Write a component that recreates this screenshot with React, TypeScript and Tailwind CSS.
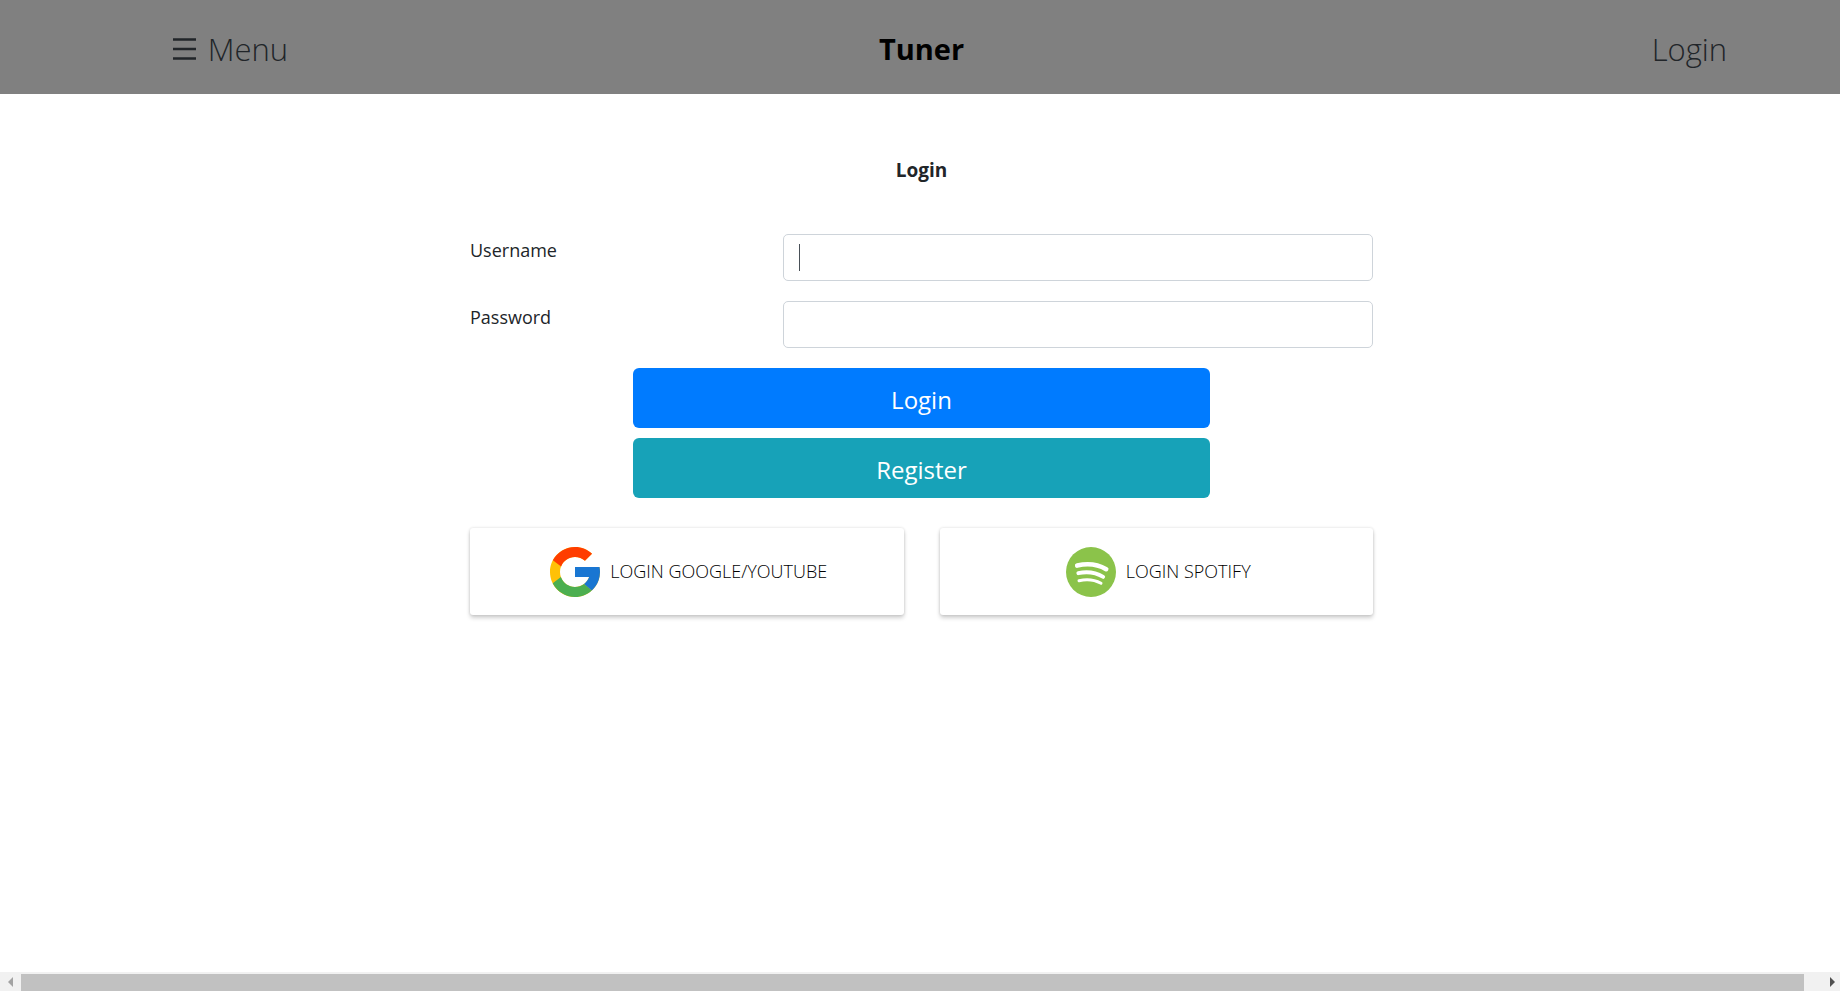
import React from "react";

function GoogleLogo() {
  return (
    <svg className="size-[50px] shrink-0" viewBox="4 4 40 40" aria-hidden="true">
      <path fill="#FFC107" d="M43.611 20.083H42V20H24v8h11.303c-1.649 4.657-6.08 8-11.303 8-6.627 0-12-5.373-12-12s5.373-12 12-12c3.059 0 5.842 1.154 7.961 3.039l5.657-5.657C34.046 6.053 29.268 4 24 4 12.955 4 4 12.955 4 24s8.955 20 20 20 20-8.955 20-20c0-1.341-.138-2.65-.389-3.917z" />
      <path fill="#FF3D00" d="M6.306 14.691l6.571 4.819C14.655 15.108 18.961 12 24 12c3.059 0 5.842 1.154 7.961 3.039l5.657-5.657C34.046 6.053 29.268 4 24 4 16.318 4 9.656 8.337 6.306 14.691z" />
      <path fill="#4CAF50" d="M24 44c5.166 0 9.86-1.977 13.409-5.192l-6.19-5.238C29.211 35.091 26.715 36 24 36c-5.202 0-9.619-3.317-11.283-7.946l-6.522 5.025C9.505 39.556 16.227 44 24 44z" />
      <path fill="#1976D2" d="M43.611 20.083H42V20H24v8h11.303c-.792 2.237-2.231 4.166-4.087 5.571l6.193 5.238C36.971 39.205 44 34 44 24c0-1.341-.138-2.65-.389-3.917z" />
    </svg>
  );
}

function SpotifyLogo() {
  return (
    <svg className="size-[50px] shrink-0" viewBox="0 0 50 50" aria-hidden="true">
      <circle cx="25" cy="25" r="25" fill="#8BC34A" />
      <g fill="none" stroke="#fff" strokeLinecap="round">
        <path strokeWidth="4.6" d="M11.2 18.6C21 16.3 32 17.5 40.2 22.2" />
        <path strokeWidth="3.8" d="M12.3 26.2C21 24.300 30 25.600 37.200 29.900" />
        <path strokeWidth="3" d="M13 33.700C20.500 32 28.500 32.700 35 36.300" />
      </g>
    </svg>
  );
}

function Field({ id, label, type, caret }: { id: string; label: string; type: string; caret?: boolean }) {
  return (
    <div className="grid grid-cols-3 gap-9">
      <label htmlFor={id} className="text-[18px] leading-8">{label}</label>
      <div className="relative col-span-2">
        <input
          id={id}
          type={type}
          className="block h-[47px] w-full rounded-[5px] border border-[#ced4da] bg-white px-[15px] text-[18px] text-[#495057] outline-none focus:border-[#80bdff]"
        />
        {caret && <span className="absolute left-4 top-[10px] h-[27px] w-px bg-[#495057]" />}
      </div>
    </div>
  );
}

const card =
  "flex h-[87px] items-center justify-center gap-[10px] rounded-[3px] bg-white pl-1 text-[18px] font-light text-black shadow-[0_3px_4px_rgba(0,0,0,0.18),0_0_3px_rgba(0,0,0,0.14)]";

export default function App() {
  return (
    <div className="flex min-h-screen flex-col overflow-x-hidden bg-white font-['Open_Sans','Noto_Sans',sans-serif] text-[#212529]">
      <div className="-mr-[3px] flex-1">
        <header className="grid h-[94px] grid-cols-12 items-center bg-[#808080] pt-1 text-center text-[31px]">
          <button type="button" className="col-span-3 flex items-center justify-center gap-3 font-light">
            <svg className="h-[22px] w-[23px]" viewBox="0 0 23 22" aria-hidden="true">
              <path d="M0 1.500h23M0 11h23M0 20.500h23" stroke="#212529" strokeWidth="2.400" />
            </svg>
            Menu
          </button>
          <h1 className="col-span-6 text-[29px] font-bold text-black">Tuner</h1>
          <a href="#login" className="col-span-2 col-start-11 font-light">Login</a>
        </header>

        <main id="login" className="mx-auto w-full max-w-[903px] pt-[60px]">
          <h2 className="text-center text-[19px] leading-8 font-bold">Login</h2>
          <form className="mt-12 flex flex-col gap-5" onSubmit={(e) => e.preventDefault()}>
            <Field id="username" label="Username" type="text" caret />
            <Field id="password" label="Password" type="password" />
            <div className="mx-auto flex w-full max-w-[577px] flex-col gap-[10px] text-2xl text-white">
              <button type="submit" className="h-[60px] rounded-md bg-[#007bff] pt-[3px]">Login</button>
              <button type="button" className="h-[60px] rounded-md bg-[#17a2b8] pt-[3px]">Register</button>
            </div>
          </form>
          <div className="mt-[30px] grid grid-cols-2 gap-9">
            <button type="button" className={card}>
              <GoogleLogo />
              LOGIN GOOGLE/YOUTUBE
            </button>
            <button type="button" className={card}>
              <SpotifyLogo />
              LOGIN SPOTIFY
            </button>
          </div>
        </main>
      </div>

      <div className="flex h-[19px] items-center bg-[#f1f1f1]" aria-hidden="true">
        <div className="flex w-[21px] justify-center">
          <svg className="h-[10px] w-[5px]" viewBox="0 0 5 10"><path d="M5 0v10L0 5z" fill="#a3a3a3" /></svg>
        </div>
        <div className="mt-[2px] h-[17px] flex-1 bg-[#c1c1c1]" />
        <div className="flex w-9 justify-end pr-[5px]">
          <svg className="h-[10px] w-[5px]" viewBox="0 0 5 10"><path d="M0 0v10l5-5z" fill="#505050" /></svg>
        </div>
      </div>
    </div>
  );
}
